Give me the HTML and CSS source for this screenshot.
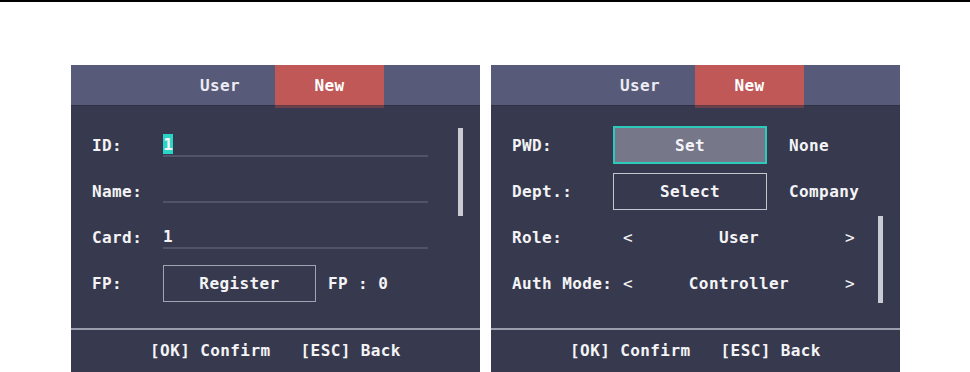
FILE: index.html
```html
<!DOCTYPE html>
<html lang="en">
<head>
<meta charset="utf-8">
<title>User - New</title>
<link rel="stylesheet" href="styles.css">
</head>
<body>
<div class="topline"></div>
<main class="screens">
  <section class="panel">
    <header class="tabs">
      <span class="tab">User</span>
      <span class="tab active">New</span>
    </header>
    <div class="body">
      <div class="row">
        <span class="label">ID:</span>
        <span class="field"><span class="cursor">1</span></span>
      </div>
      <div class="row">
        <span class="label">Name:</span>
        <span class="field"></span>
      </div>
      <div class="row">
        <span class="label">Card:</span>
        <span class="field">1</span>
      </div>
      <div class="row">
        <span class="label">FP:</span>
        <span class="btn btn-register">Register</span>
        <span class="note note-fp">FP : 0</span>
      </div>
      <div class="scroll scroll-top"></div>
    </div>
    <footer class="foot">[OK] Confirm&nbsp;&nbsp;&nbsp;[ESC] Back</footer>
  </section>

  <section class="panel">
    <header class="tabs">
      <span class="tab">User</span>
      <span class="tab active">New</span>
    </header>
    <div class="body">
      <div class="row">
        <span class="label label-wide">PWD:</span>
        <span class="btn btn-focus">Set</span>
        <span class="note">None</span>
      </div>
      <div class="row">
        <span class="label label-wide">Dept.:</span>
        <span class="btn btn-plain">Select</span>
        <span class="note">Company</span>
      </div>
      <div class="row">
        <span class="label label-wide">Role:</span>
        <span class="picker"><span class="chev">&lt;</span><span class="pick-val">User</span><span class="chev">&gt;</span></span>
      </div>
      <div class="row">
        <span class="label label-wide">Auth Mode:</span>
        <span class="picker"><span class="chev">&lt;</span><span class="pick-val">Controller</span><span class="chev">&gt;</span></span>
      </div>
      <div class="scroll scroll-bottom"></div>
    </div>
    <footer class="foot">[OK] Confirm&nbsp;&nbsp;&nbsp;[ESC] Back</footer>
  </section>
</main>
</body>
</html>
```

FILE: styles.css
```css
* { box-sizing: border-box; }

html, body {
  margin: 0;
  background: #ffffff;
  overflow: hidden;
}

body {
  font-family: "DejaVu Sans Mono", "Liberation Mono", monospace;
  font-weight: bold;
  font-size: 16px;
  letter-spacing: 0.4px;
}

.topline {
  height: 2px;
  background: #000000;
}

.screens {
  display: flex;
  gap: 11px;
  padding: 63px 0 0 71px;
}

.panel {
  width: 409px;
  background: #373a4f;
  color: #f4f4f6;
  display: flex;
  flex-direction: column;
}

.tabs {
  height: 41px;
  background: #575a78;
  border-bottom: 1px solid #2f3246;
  display: flex;
  padding-left: 94px;
}

.tab {
  width: 110px;
  display: flex;
  align-items: center;
  justify-content: center;
  color: #ececf2;
}

.tab.active {
  width: 109px;
  background: #c05857;
  color: #ffffff;
  box-shadow: 0 3px 0 rgba(150, 70, 72, 0.55);
}

.body {
  position: relative;
  height: 222px;
  padding-top: 16px;
}

.row {
  height: 46px;
  display: flex;
  align-items: center;
  padding-left: 21px;
}

.label {
  width: 71px;
  flex-shrink: 0;
}

.label-wide {
  width: 101px;
}

.field {
  width: 265px;
  height: 24px;
  border-bottom: 2px solid #50536a;
  display: flex;
  align-items: center;
}

.cursor {
  width: 10px;
  height: 20px;
  background: #2bd5c6;
  display: flex;
  align-items: center;
  justify-content: center;
  letter-spacing: 0;
}

.btn {
  width: 154px;
  height: 38px;
  display: flex;
  align-items: center;
  justify-content: center;
  flex-shrink: 0;
}

.btn-register {
  width: 153px;
  height: 37px;
  border: 1px solid #a2a3b1;
}

.btn-focus {
  background: #77778a;
  border: 2px solid #2ccabb;
}

.btn-plain {
  height: 37px;
  border: 1px solid #c4c5cd;
}

.note {
  margin-left: 22px;
}

.note-fp {
  margin-left: 12px;
}

.picker {
  width: 252px;
  display: flex;
  align-items: center;
  padding: 0 10px;
}

.chev {
  font-weight: normal;
  width: 10px;
}

.pick-val {
  flex: 1;
  text-align: center;
}

.scroll {
  position: absolute;
  left: 387px;
  width: 5px;
  background: #c9cad2;
}

.scroll-top {
  top: 22px;
  height: 88px;
}

.scroll-bottom {
  top: 110px;
  height: 87px;
}

.foot {
  border-top: 2px solid #9b9dac;
  height: 46px;
  padding-top: 2px;
  line-height: 38px;
  text-align: center;
  white-space: nowrap;
}
```
